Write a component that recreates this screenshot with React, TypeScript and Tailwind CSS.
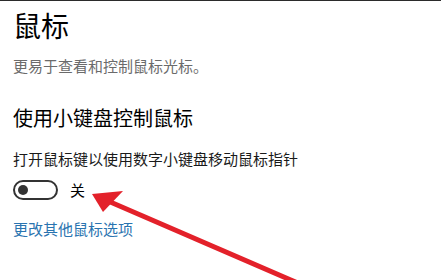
const Arrow = () => (
  <svg
    className="pointer-events-none absolute left-0 top-0"
    width={441}
    height={280}
    viewBox="0 0 441 280"
  >
    <line x1={300} y1={283} x2={108} y2={200} stroke="#e3212a" strokeWidth={5} />
    <polygon points="92,193 123,190 103,211" fill="#e3212a" />
  </svg>
);

const App: React.FC = () => {
  return (
    <div
      className="relative h-[280px] w-[441px] overflow-hidden border-t border-[#2b2b2b] bg-white pl-[13px]"
      style={{ fontFamily: '"Noto Sans CJK SC", "Noto Sans", sans-serif' }}
    >
      <h1 className="mt-[6px] text-[28px] leading-[36px] font-normal text-black">鼠标</h1>
      <p className="mt-[13px] text-[15px] leading-[20px] text-[#6b6b6b]">更易于查看和控制鼠标光标。</p>

      <h2 className="mt-[28px] text-[20px] leading-[28px] font-normal text-black">使用小键盘控制鼠标</h2>
      <p className="mt-[17px] text-[15px] leading-[20px] text-[#1a1a1a]">打开鼠标键以使用数字小键盘移动鼠标指针</p>

      <div className="mt-[11px] flex h-[20px] items-center gap-[12px]">
        <div className="flex h-[20px] w-[45px] items-center rounded-full border-2 border-[#333] px-[3px]">
          <div className="h-[10px] w-[10px] rounded-full bg-[#333]" />
        </div>
        <span className="text-[15px] leading-[20px] text-black">关</span>
      </div>

      <a className="mt-[19px] block text-[15px] leading-[20px] text-[#2a74b0]" href="#">
        更改其他鼠标选项
      </a>

      <Arrow />
    </div>
  );
};

export default App;
